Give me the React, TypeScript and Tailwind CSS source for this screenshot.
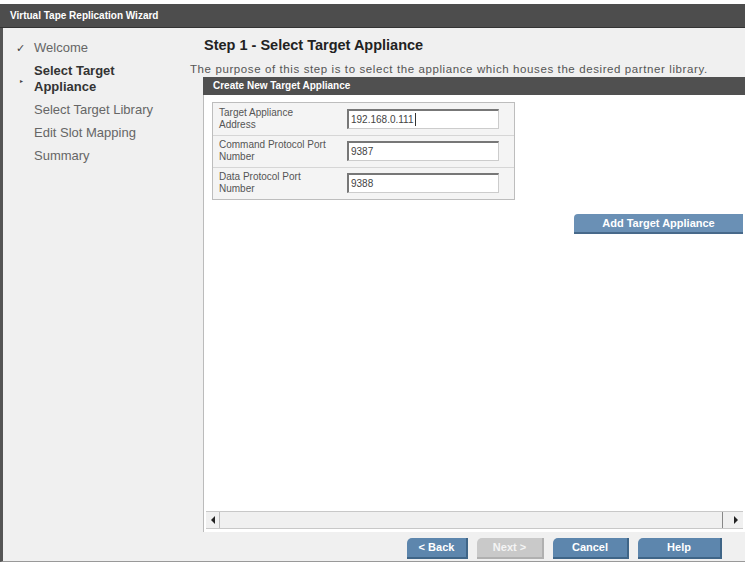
import React from 'react';

const steps = [
  { label: 'Welcome', done: true },
  { label: 'Select Target Appliance', current: true },
  { label: 'Select Target Library' },
  { label: 'Edit Slot Mapping' },
  { label: 'Summary' },
];

const fields = [
  { label: 'Target Appliance Address', value: '192.168.0.111', caret: true },
  { label: 'Command Protocol Port Number', value: '9387' },
  { label: 'Data Protocol Port Number', value: '9388' },
];

const Btn: React.FC<{ label: string; disabled?: boolean; w: string }> = ({ label, disabled, w }) => (
  <button
    className={
      (disabled
        ? 'bg-[#c9c9c9] text-[#f4f4f4] border-[#b0b0b0] '
        : 'bg-[#5d86ad] text-white border-[#3f6587] ') +
      w +
      ' h-[21px] rounded-tl-[5px] border-b-2 border-r-2 text-[11px] font-bold'
    }
  >
    {label}
  </button>
);

const App: React.FC = () => {
  return (
    <div className="w-[745px] h-[562px] bg-white pt-[4px] font-['Liberation_Sans',Arial,sans-serif] overflow-hidden">
      <div className="h-[24px] bg-[#4d4d4d] border-b border-[#333] flex items-center pl-[10px]">
        <span className="text-white text-[10px] font-bold">Virtual Tape Replication Wizard</span>
      </div>
      <div className="flex h-[534px] bg-[#f0f0f0] border-l-[3px] border-[#555] border-b border-b-[#999]">
        {/* sidebar */}
        <div className="w-[185px] shrink-0 pt-[12px] pl-[13px] flex flex-col gap-[7px]">
          {steps.map((s) => (
            <div key={s.label} className="flex items-start text-[13px] leading-[16px]">
              <span className="w-[18px] shrink-0 text-[11px] text-[#444]">
                {s.done ? '✓' : s.current ? <span className="inline-block mt-[10px] ml-[4px] text-[6px]">▸</span> : ''}
              </span>
              <span
                className={
                  s.current
                    ? 'font-bold text-[#333] w-[100px] leading-[16px]'
                    : 'text-[#666]'
                }
              >
                {s.label}
              </span>
            </div>
          ))}
        </div>
        {/* content */}
        <div className="flex-1 flex flex-col">
          <div className="pl-[16px] pt-[7px] text-[14.5px] font-bold text-[#222]">Step 1 - Select Target Appliance</div>
          <div className="pt-[6px] pb-[1px] pl-[2px] text-[11.5px] tracking-[0.6px] text-[#555] leading-[13px] whitespace-nowrap">
            The purpose of this step is to select the appliance which houses the desired partner library.
          </div>
          <div className="ml-[15px] flex-1 flex flex-col">
            <div className="h-[18px] bg-[#505050] flex items-center pl-[10px] text-white text-[10px] font-bold">
              Create New Target Appliance
            </div>
            <div className="flex-1 bg-white border-l border-[#bbb] flex flex-col">
              <div className="mt-[7px] ml-[8px] w-[303px] border border-[#bdbdbd] bg-[#f4f4f4]">
                {fields.map((f, i) => (
                  <div
                    key={f.label}
                    className={'flex items-center h-[32px] ' + (i > 0 ? 'border-t border-[#d6d6d6]' : '')}
                  >
                    <div className="w-[134px] pl-[6px]">
                      <div className="w-[112px] text-[10px] leading-[12px] text-[#555]">{f.label}</div>
                    </div>
                    <div className="w-[152px] h-[20px] bg-white border-t-2 border-l-2 border-[#777] border-r border-b border-r-[#ccc] border-b-[#ccc] flex items-center pl-[2px] text-[10px] text-[#444]">
                      {f.value}
                      {f.caret && <span className="inline-block w-px h-[13px] bg-[#333] ml-[2px]" />}
                    </div>
                  </div>
                ))}
              </div>
              <div className="flex justify-end mt-[14px] pr-[2px]">
                <button className="w-[169px] h-[20px] bg-[#6a90b5] rounded-tl-[4px] border-b-2 border-[#47698a] text-white text-[11px] font-bold">
                  Add Target Appliance
                </button>
              </div>
              <div className="flex-1" />
              <div className="h-[18px] mb-[3px] mx-[2px] flex items-center bg-[#f0f0f0] border-y border-[#c8c8c8]">
                <div className="w-[14px] h-full flex items-center justify-center border-r border-[#bbb]">
                  <span className="w-0 h-0 border-y-[4px] border-y-transparent border-r-[4px] border-r-[#222]" />
                </div>
                <div className="flex-1 h-full border-r border-[#888]" />
                <div className="w-[14px] h-full flex items-center justify-center ml-[6px]">
                  <span className="w-0 h-0 border-y-[4px] border-y-transparent border-l-[4px] border-l-[#222]" />
                </div>
              </div>
            </div>
            <div className="h-[29px] flex items-center justify-end gap-[9px] pr-[23px] pt-[3px] bg-[#f0f0f0]">
              <Btn label="< Back" w="w-[61px]" />
              <Btn label="Next >" w="w-[67px]" disabled />
              <Btn label="Cancel" w="w-[76px]" />
              <Btn label="Help" w="w-[84px]" />
            </div>
          </div>
        </div>
      </div>
    </div>
  );
};

export default App;
